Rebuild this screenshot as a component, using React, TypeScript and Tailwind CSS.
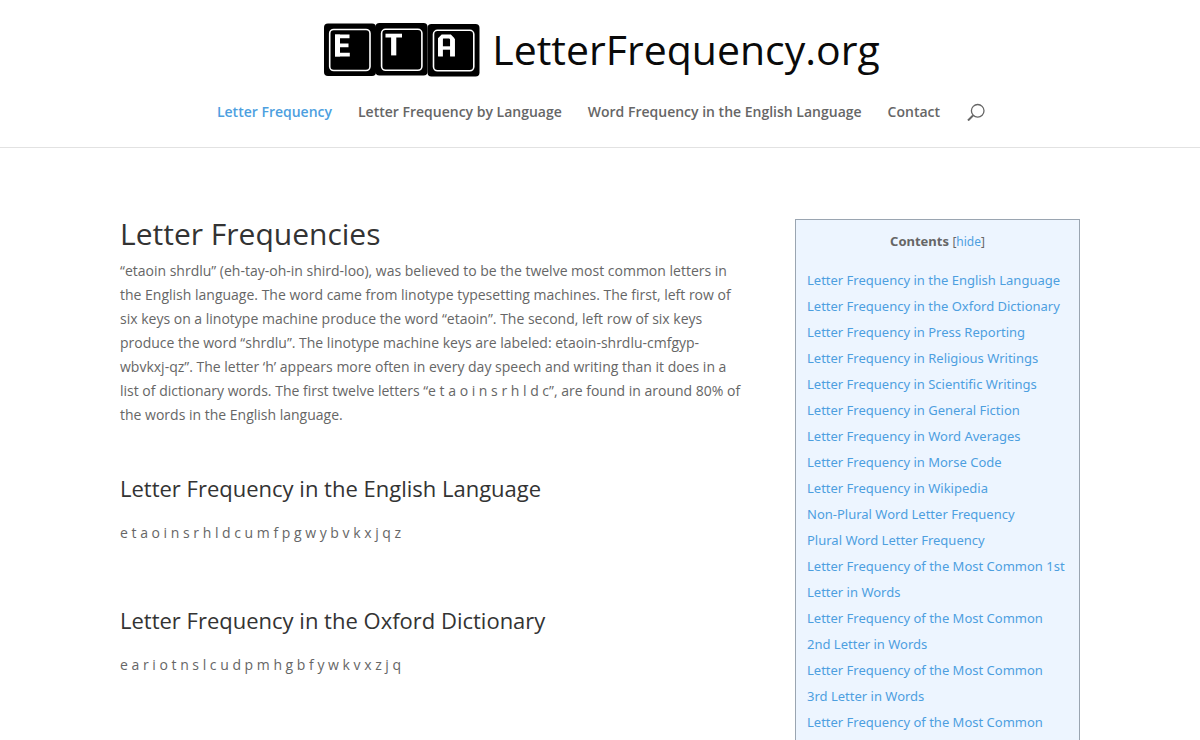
const navItems = [
  { label: "Letter Frequency", active: true },
  { label: "Letter Frequency by Language", active: false },
  { label: "Word Frequency in the English Language", active: false },
  { label: "Contact", active: false },
];

// Ordinals from "2nd" on stay on the same line as the word "Letter".
const contents = [
  "Letter Frequency in the English Language",
  "Letter Frequency in the Oxford Dictionary",
  "Letter Frequency in Press Reporting",
  "Letter Frequency in Religious Writings",
  "Letter Frequency in Scientific Writings",
  "Letter Frequency in General Fiction",
  "Letter Frequency in Word Averages",
  "Letter Frequency in Morse Code",
  "Letter Frequency in Wikipedia",
  "Non-Plural Word Letter Frequency",
  "Plural Word Letter Frequency",
  "Letter Frequency of the Most Common 1st Letter in Words",
  "Letter Frequency of the Most Common 2nd\u00a0Letter in Words",
  "Letter Frequency of the Most Common 3rd\u00a0Letter in Words",
  "Letter Frequency of the Most Common",
];

const sections = [
  { title: "Letter Frequency in the English Language", letters: "e t a o i n s r h l d c u m f p g w y b v k x j q z" },
  { title: "Letter Frequency in the Oxford Dictionary", letters: "e a r i o t n s l c u d p m h g b f y w k v x z j q" },
];

function Logo() {
  return (
    <a href="#" className="flex items-start gap-3 pl-1 text-[#0a0a0a]">
      <svg width="156" height="54" viewBox="0 0 156 54" aria-hidden="true">
        <rect x="0" y="0.5" width="52" height="52.5" rx="4" fill="#000" />
        <rect x="51.5" y="0" width="52" height="52.5" rx="4" fill="#000" />
        <rect x="103.5" y="1" width="52" height="52.5" rx="4" fill="#000" />
        <g fill="none" stroke="#fff" strokeWidth="1.6">
          <rect x="5.7" y="6.5" width="40.3" height="41" rx="4" />
          <rect x="57.6" y="6.3" width="40.3" height="41" rx="4" />
          <rect x="109.5" y="7.3" width="40.3" height="40.5" rx="4" />
        </g>
        <g fill="none" stroke="#fff">
          <path d="M11 13.4H25.5M11 22.4H24.5M11 31.6H25.8" strokeWidth="3.6" />
          <path d="M13.5 11.6V33.4" strokeWidth="5" />
          <path d="M61.5 12.6H78" strokeWidth="3.8" />
          <path d="M69.7 11V32.4" strokeWidth="5.2" />
          <path d="M116 33V16L118.5 13.4H126L128.500 16V33" strokeWidth="4" />
          <path d="M128.500 16V33.400M116.500 16V33.400" strokeWidth="4.8" />
          <path d="M116 25H129" strokeWidth="3.4" />
        </g>
      </svg>
      <span className="text-[41px] leading-[52px]">LetterFrequency.org</span>
    </a>
  );
}

function SearchIcon() {
  return (
    <svg width="18" height="18" viewBox="0 0 18 18" fill="none" stroke="#666" aria-hidden="true">
      <circle cx="10.7" cy="7.8" r="6.3" strokeWidth="1.3" />
      <path d="M6 12.5L1 17.5" strokeWidth="2" />
    </svg>
  );
}

export default function App() {
  return (
    <div className="min-h-screen bg-white font-['Open_Sans',sans-serif] text-sm text-[#666]">
      <header className="flex flex-col items-center border-b border-[#e2e2e2] pt-[23px]">
        <Logo />
        <nav className="flex items-center gap-[26px] pt-6 pb-6 pl-0.5 font-semibold leading-[22px]">
          {navItems.map((item) => (
            <a key={item.label} href="#" className={item.active ? "text-[#4d9fdf]" : "text-[#666]"}>
              {item.label}
            </a>
          ))}
          <button type="button" aria-label="Search" className="pl-px">
            <SearchIcon />
          </button>
        </nav>
      </header>

      <div className="mx-auto flex max-w-[960px] items-start justify-between pt-[71px]">
        <main className="w-[624px]">
          <h1 className="pb-[10px] text-[30px] leading-[30px] text-[#333]">Letter Frequencies</h1>
          <p className="leading-[24px]">
            “etaoin shrdlu” (eh-tay-oh-in shird-loo), was believed to be the twelve most common letters in the English
            language. The word came from linotype typesetting machines. The first, left row of six keys on a linotype
            machine produce the word “etaoin”. The second, left row of six keys produce the word “shrdlu”. The linotype
            machine keys are labeled: etaoin-shrdlu-cmfgyp-wbvkxj-qz”. The letter ‘h’ appears more often in every day
            speech and writing than it does in a list of dictionary words. The first twelve letters “e t a o i n s r h l
            d c”, are found in around 80% of the words in the English language.
          </p>
          {sections.map((section) => (
            <section key={section.title} className="pt-12 pb-[14px]">
              <h2 className="text-[22px] leading-[26px] text-[#333]">{section.title}</h2>
              <p className="pt-5 leading-[24px]">{section.letters}</p>
            </section>
          ))}
        </main>

        <aside className="w-[285px] border border-[#9aa5b1] bg-[#edf5ff] px-[10px] py-2 font-['Noto_Sans',sans-serif] text-[13px] leading-[26px]">
          <p className="pb-[13px] text-center">
            <strong className="font-bold">Contents</strong>{" "}
            <span className="text-xs">
              [<a href="#" className="text-[#4d9fdf]">hide</a>]
            </span>
          </p>
          <ul className="pl-px">
            {contents.map((entry) => (
              <li key={entry}>
                <a href="#" className="text-[#4d9fdf]">{entry}</a>
              </li>
            ))}
          </ul>
        </aside>
      </div>
    </div>
  );
}
